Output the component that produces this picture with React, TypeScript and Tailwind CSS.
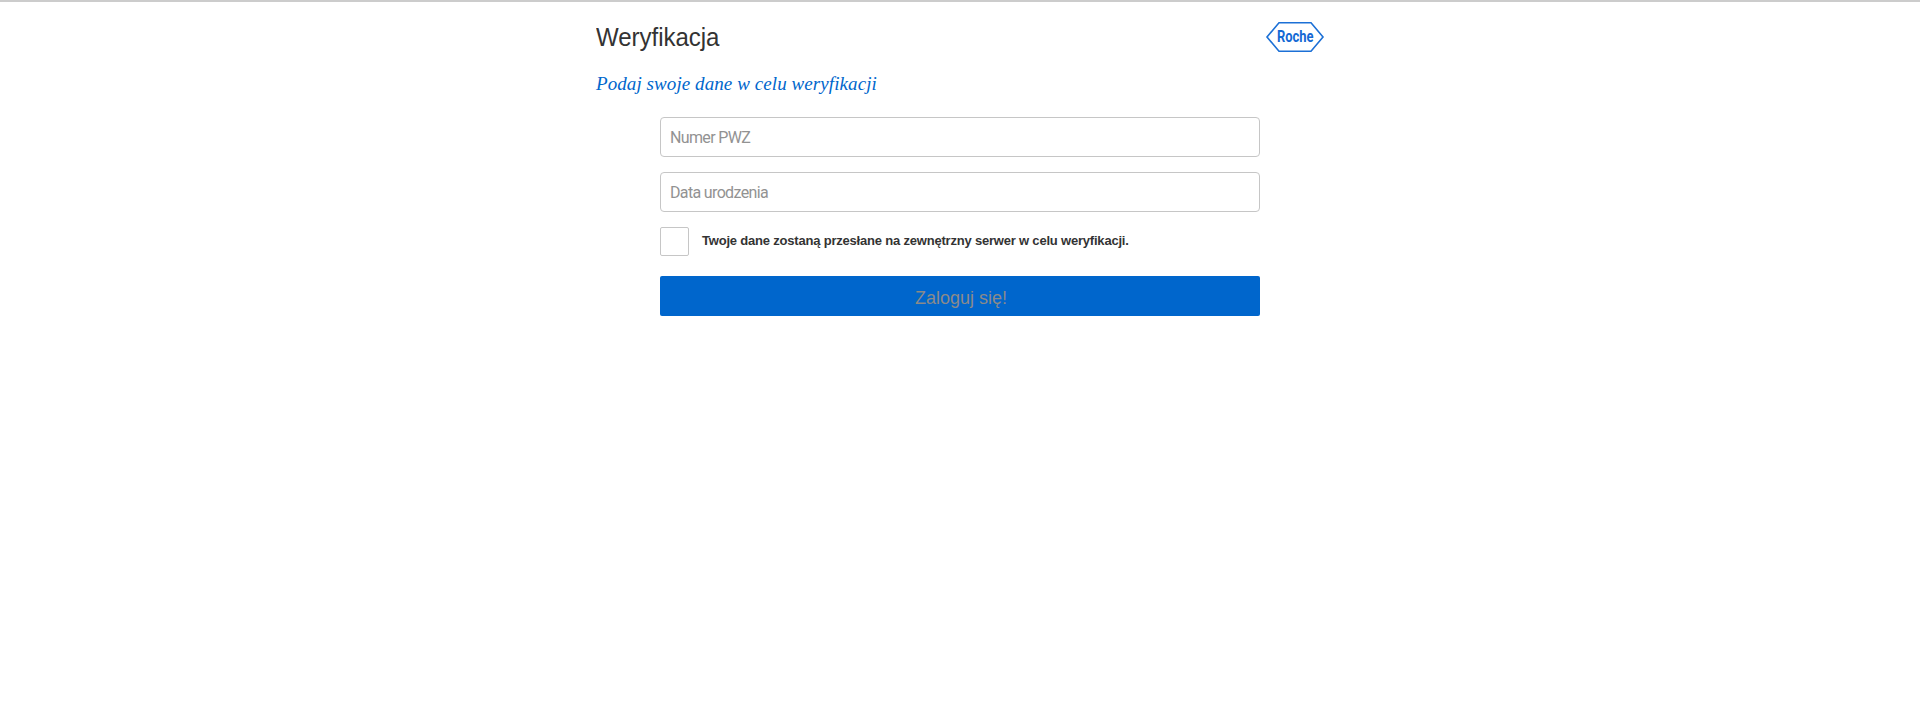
function RocheLogo() {
  return (
    <svg width="58" height="32" viewBox="0 0 58 32" className="shrink-0 overflow-visible" role="img" aria-label="Roche">
      <path d="M13 1.8H45L57 16L45 30.2H13L1 16Z" fill="none" stroke="#1c70d6" strokeWidth="1.6" />
      <text
        x="11"
        y="21.3"
        textLength="36.5"
        lengthAdjust="spacingAndGlyphs"
        fill="#1469d4"
        fontFamily="Roboto, 'Liberation Sans', sans-serif"
        fontWeight="700"
        fontSize="17"
      >
        Roche
      </text>
    </svg>
  );
}

const inputClass =
  "block h-10 w-full rounded border border-[#c6c6c6] bg-white px-[9px] pt-px font-[Roboto,sans-serif] text-base font-normal tracking-[-0.65px] text-[#333] outline-none placeholder:text-[#929292]";

export default function App() {
  return (
    <div className="min-h-[704px] border-t-2 border-[#cccccc] bg-white font-['Liberation_Sans',sans-serif]">
      <main className="mx-auto w-[728px]">
        <header className="flex h-[70px] items-start justify-between pt-[19px]">
          <h1 className="origin-left scale-x-[0.925] text-[26px] leading-[32px] tracking-[-0.05px] text-[#333]">Weryfikacja</h1>
          <RocheLogo />
        </header>
        <h2 className="h-[45px] font-['Liberation_Serif',serif] text-[19px] leading-[23px] tracking-[0.08px] text-[#0066cc] italic">
          Podaj swoje dane w celu weryfikacji
        </h2>
        <form className="mx-auto flex w-[600px] flex-col">
          <input className={inputClass} placeholder="Numer PWZ" />
          <input className={`${inputClass} mt-[15px]`} placeholder="Data urodzenia" />
          <label className="mt-[15px] flex h-[29px] items-center">
            <input type="checkbox" className="h-[29px] w-[29px] shrink-0 appearance-none rounded-xs border border-[#c6c6c6] bg-white" />
            <span className="ml-[13px] pb-0.5 text-[13px] leading-[18px] font-bold tracking-[-0.2px] whitespace-nowrap text-[#333]">
              Twoje dane zostaną przesłane na zewnętrzny serwer w celu weryfikacji.
            </span>
          </label>
          <button type="button" className="mt-5 h-10 rounded-xs bg-[#0066cc] pt-[3px] pl-0.5 text-[18px] leading-6 text-[#8a8a8a]">
            Zaloguj się!
          </button>
        </form>
      </main>
    </div>
  );
}
